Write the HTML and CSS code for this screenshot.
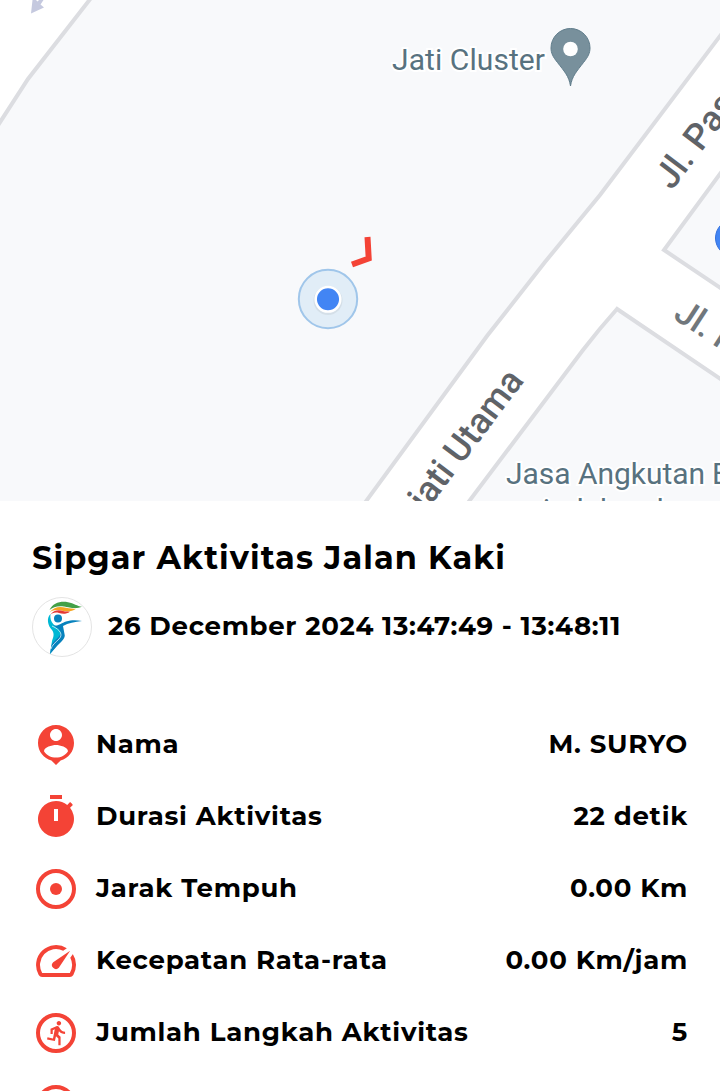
FILE: index.html
```
<!DOCTYPE html>
<html lang="id">
  <head>
    <meta charset="UTF-8" />
    <meta name="viewport" content="width=device-width, initial-scale=1.0" />
    <title>Sipgar Aktivitas Jalan Kaki</title>
    <link rel="stylesheet" href="styles.css">
  </head>
  <body>
    <div class="screen">
      <svg class="map" viewBox="0 0 720 501">
        <!-- Roads -->
        <g class="road">
          <path d="M-5 130L28 79L91 -2L-5 -5Z" />
          <path d="M723 32L600 195L545 262L487 336L364 504L467 504L583 350Q600 328 617 309L725 382V291L664 250L725 167Z" />
        </g>
        <path class="arrow" d="M31 13.5L32.5 0H36L37.5 1.5L39 0H43.5L40.5 4.5L44 7.5Z" />

        <!-- Street names -->
        <text class="street" x="426" y="512" transform="rotate(-53 426 512)">jati Utama</text>
        <text class="street" x="672" y="191" transform="rotate(-53 672 191)">Jl. Pas</text>
        <text class="street minor" x="672" y="318" transform="rotate(33 672 318)">Jl. M</text>

        <!-- Places -->
        <text class="place" x="392" y="70" textLength="153">Jati Cluster</text>
        <path class="pin" d="M570.5 86C569 76 564 71 557.5 62.500C553 57 551 53 551 48A19.500 19.500 0 0 1 590 48C590 53 588 57 583.500 62.500C577 71 572 76 570.5 86Z" />
        <circle cx="570.5" cy="49" r="7.300" fill="#fff" />
        <text class="place" x="506" y="484" textLength="199">Jasa Angkutan</text>
        <text class="place" x="712" y="484">B</text>
        <text class="place" x="526" y="520">pindahan bar</text>
        <circle cx="734" cy="238" r="18.500" fill="#4285f4" stroke="#3470dc" />

        <!-- Route and current position -->
        <path class="route" d="M367.500 237L368.700 258.500L352 264.500" />
        <circle class="accuracy" cx="328" cy="299" r="29.200" />
        <circle class="shadow" cx="328" cy="300.500" r="13" />
        <circle class="position" cx="328" cy="299.300" r="12.300" />
      </svg>

      <main class="details">
        <h1 class="title">Sipgar Aktivitas Jalan Kaki</h1>
        <div class="summary">
          <svg class="logo" viewBox="0 0 60 60">
            <circle cx="30" cy="30" r="29.500" fill="#fff" stroke="#e4e4e4" />
            <path fill="#43a047" d="M17.500 13C21 6 28 4 36 5.200C42 6.200 45 9 50 9.800C45 12 38 11 32 9.500C26 8.500 21 10 17.500 13Z" />
            <path fill="#f5a623" d="M17.500 15.500C22 9.500 28 9 34 10.800C38 12 41 11.500 44 11.800C39 15.500 34 14.500 29 13.500C24 12.500 21 13 17.500 15.500Z" />
            <path fill="#e53935" d="M18 18C22 12.500 27 13 31 14C34 14.800 35 14.300 38 14.800C34 17.500 30 17 27 16C23 15 20 16 18 18Z" />
            <circle cx="26" cy="21.500" r="4" fill="#0782bd" />
            <path fill="#00b8d4" d="M18.500 17C14 21 16 29 20 33C23 37 21 41 20 44L18 57L27 46C32 41 32 37 28 33C24 29 17 26 18.500 17Z" />
            <path fill="#0782bd" d="M21 28C26 30 29 26 34 24.500C40 22.500 45 23 50 24C43 25 36 26 31 29L32.500 37C34 41 29 45 25 49L18 57L19.500 48C22 42 31 39 28 34C26 31 23 30 21 28Z" />
            <path fill="none" stroke="#fff" stroke-width=".7" d="M20 29C29 33 31 38 27 42C23 46 20 48 19 52" />
          </svg>
          <span class="date">26 December 2024 13:47:49 - 13:48:11</span>
        </div>

        <ul class="stats">
          <li class="stat">
            <svg class="icon" viewBox="0 0 24 24"><path d="M12 2c-4.970 0-9 4.030-9 9 0 4.170 2.840 7.670 6.690 8.690L12 22l2.310-2.310C18.160 18.670 21 15.170 21 11c0-4.970-4.030-9-9-9zm0 2c1.660 0 3 1.340 3 3s-1.340 3-3 3-3-1.340-3-3 1.340-3 3-3zm0 14.300c-2.500 0-4.710-1.280-6-3.220.030-1.990 4-3.080 6-3.080 1.990 0 5.970 1.090 6 3.080-1.290 1.940-3.500 3.220-6 3.220z" /></svg>
            <span class="label">Nama</span>
            <span class="value">M. SURYO</span>
          </li>
          <li class="stat">
            <svg class="icon" viewBox="0 0 24 24"><path d="M9 1h6v2H9zM19.030 7.390l1.420-1.420c-.430-.510-.900-.990-1.410-1.410l-1.420 1.420A8.960 8.960 0 0 0 12 4a9 9 0 1 0 7.030 3.390zM13 14h-2V8h2z" /></svg>
            <span class="label">Durasi Aktivitas</span>
            <span class="value">22 detik</span>
          </li>
          <li class="stat">
            <svg class="icon" viewBox="0 0 24 24"><circle class="ring" cx="12" cy="12" r="9" /><circle cx="12" cy="12" r="3" /></svg>
            <span class="label">Jarak Tempuh</span>
            <span class="value">0.00 Km</span>
          </li>
          <li class="stat">
            <svg class="icon" viewBox="0 0 24 24"><path d="M20.380 8.570l-1.230 1.850a8 8 0 0 1-.220 7.580H5.070A8 8 0 0 1 15.580 6.850l1.850-1.230A10 10 0 0 0 3.350 19a2 2 0 0 0 1.720 1h13.850a2 2 0 0 0 1.740-1 10 10 0 0 0-.270-10.440zM10.590 15.410a2 2 0 0 0 2.830 0l5.660-8.490-8.490 5.660a2 2 0 0 0 0 2.830z" /></svg>
            <span class="label">Kecepatan Rata-rata</span>
            <span class="value">0.00 Km/jam</span>
          </li>
          <li class="stat">
            <svg class="icon" viewBox="0 0 24 24"><circle class="ring" cx="12" cy="12" r="9" /><path transform="translate(5.900 5.200) scale(.56)" d="M13.490 5.480c1.100 0 2-.9 2-2s-.9-2-2-2-2 .9-2 2 .9 2 2 2zm-3.600 13.900l1-4.400 2.100 2v6h2v-7.500l-2.100-2 .6-3c1.300 1.500 3.300 2.500 5.500 2.500v-2c-1.900 0-3.500-1-4.300-2.400l-1-1.600c-.4-.6-1-1-1.700-1-.3 0-.5.1-.8.1l-5.200 2.200v4.700h2v-3.400l1.800-.7-1.600 8.100-4.900-1-.4 2 7 1.400z" /></svg>
            <span class="label">Jumlah Langkah Aktivitas</span>
            <span class="value">5</span>
          </li>
          <li class="stat">
            <svg class="icon" viewBox="0 0 24 24"><circle class="ring" cx="12" cy="12" r="9" /></svg>
          </li>
        </ul>
      </main>
    </div>
  </body>
</html>
```
FILE: styles.css
```
* {
  box-sizing: border-box;
}

body {
  margin: 0;
  background-color: #fff;
  color: #000;
  font-family: Montserrat, Inter, sans-serif;
}

.screen {
  width: 720px;
  height: 1091px;
  overflow: hidden;
}

/* Map */

.map {
  display: block;
  width: 720px;
  height: 501px;
  background-color: #f8f9fb;
  font-family: Roboto, sans-serif;
}

.road {
  fill: #fff;
  stroke: #dcdde1;
  stroke-width: 4;
}

.arrow {
  fill: #c5c9df;
}

.street {
  fill: #5f6368;
  font-size: 36px;
  font-weight: 500;
}

.minor {
  fill: #70777c;
  font-size: 35px;
}

.place {
  fill: #58727f;
  font-size: 30px;
  stroke: #fff;
  stroke-width: 4;
  paint-order: stroke;
}

.pin {
  fill: #78909c;
  stroke: #607d8b;
}

.route {
  fill: none;
  stroke: #f44336;
  stroke-width: 6;
}

.accuracy {
  fill: #e1edf7;
  stroke: #a0c6ea;
  stroke-width: 2;
}

.shadow {
  fill: #c8d3dc;
  stroke: #d4dfe8;
  stroke-width: 3;
}

.position {
  fill: #4285f4;
  stroke: #fff;
  stroke-width: 2.5;
}

/* Details */

.details {
  padding: 37px 32px 0;
}

.title {
  margin: 0;
  font-size: 32px;
  line-height: 40px;
  font-weight: 700;
  letter-spacing: 1.06px;
  white-space: nowrap;
}

.summary {
  display: flex;
  align-items: center;
  gap: 16px;
  margin-top: 19px;
  height: 60px;
}

.logo {
  width: 60px;
  height: 60px;
}

.date {
  padding-bottom: 2px;
  font-size: 26px;
  font-weight: 700;
  letter-spacing: 0.7px;
  white-space: nowrap;
}

.stats {
  margin: 52px 0 0;
  padding: 0;
  list-style: none;
}

.stat {
  display: flex;
  align-items: center;
  height: 72px;
  font-size: 26px;
  font-weight: 700;
  letter-spacing: 0.74px;
  white-space: nowrap;
}

.icon {
  width: 48px;
  height: 48px;
  margin-right: 16px;
  fill: #f44336;
}

.ring {
  fill: none;
  stroke: #f44336;
  stroke-width: 2;
}

.label,
.value {
  padding-bottom: 2px;
}

.value {
  margin-left: auto;
}
```
